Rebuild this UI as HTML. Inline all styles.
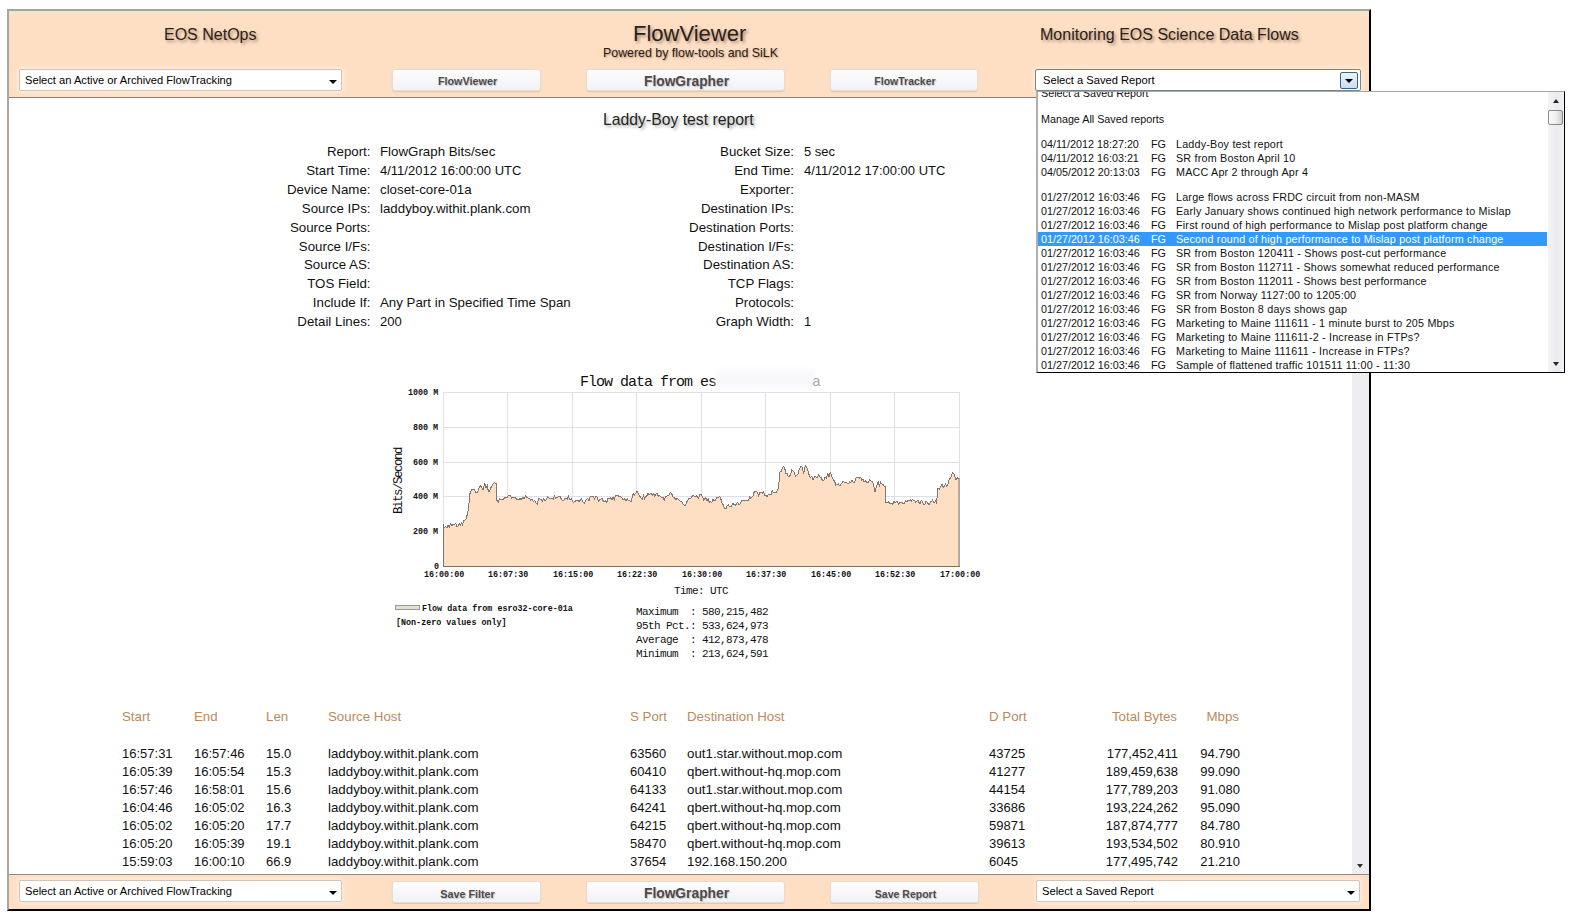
<!DOCTYPE html>
<html><head><meta charset="utf-8">
<style>
*{margin:0;padding:0;box-sizing:border-box}
html,body{width:1574px;height:920px;overflow:hidden;background:#fff;font-family:"Liberation Sans",sans-serif;color:#111}
.a{position:absolute;white-space:nowrap}
#frame{position:absolute;left:7px;top:9px;width:1364px;height:902px;border-top:2px solid #a3a69c;border-left:2px solid #aba49f;border-right:2px solid #000;border-bottom:2px solid #000}
.band{position:absolute;left:9px;width:1360px;background:#ffdfc4}
.ttl{color:#2b2018;text-shadow:2px 2px 3px rgba(60,40,20,.45)}
.sel{position:absolute;height:22px;background:#fff;border:1px solid #cfc5bb;border-radius:2px;box-shadow:0 0 5px 1px rgba(255,255,255,.55);font-size:11.15px;line-height:21px;padding-left:5px;color:#000}
.sel .arr{position:absolute;right:4px;top:10px;width:0;height:0;border-left:4px solid transparent;border-right:4px solid transparent;border-top:4px solid #000}
.btn{position:absolute;height:22px;background:linear-gradient(#fdfdff,#f2f1f4);border:1px solid #e4ddd6;border-radius:3px;box-shadow:0 1px 1px rgba(0,0,0,.12);font-weight:bold;color:#4a4a4a;text-align:center;padding-left:2px;text-shadow:1px 1px 1px rgba(0,0,0,.18)}
.lbl{position:absolute;text-align:right;font-size:13.3px;line-height:18.9px}
.val{position:absolute;font-size:13.3px;line-height:18.9px}
.mono{font-family:"Liberation Mono",monospace}
.th{color:#bb8a5c;font-size:13.3px}
.td{font-size:13.3px;color:#111}
.pop{position:absolute;left:1036px;top:91px;width:529px;height:282px;background:#fff;border-top:1px solid #a5a5a5;border-left:2px solid #b0b0b0;border-right:1px solid #000;border-bottom:1px solid #000;overflow:hidden;font-size:10.75px}
.pop .r{position:absolute;left:0;height:14px;line-height:14px;width:509px;white-space:nowrap}
.pop .r span{position:absolute}
.pop .ds{letter-spacing:.2px}
.tiny{font-family:"Liberation Mono",monospace;font-size:8.4px;font-weight:bold;line-height:8px;color:#111}
</style></head><body>
<div id="frame"></div>
<div class="band" style="top:11px;height:87px"></div>
<div class="a" style="left:9px;top:11px;width:1360px;height:4px;background:linear-gradient(#efe8cc,#ffdfc4)"></div>
<div class="a" style="left:9px;top:97px;width:1360px;height:1px;background:#8a807b"></div>
<div class="a" style="left:9px;top:98px;width:1360px;height:776px;background:#fff"></div>
<div class="band" style="top:875px;height:34px"></div>
<div class="a" style="left:9px;top:874px;width:1360px;height:1px;background:#8f8a86"></div>
<!-- content scrollbar -->
<div class="a" style="left:1352px;top:98px;width:17px;height:776px;background:#eeedf0"></div>
<div class="a" style="left:1357px;top:864px;width:0;height:0;border-left:3.5px solid transparent;border-right:3.5px solid transparent;border-top:4px solid #333"></div>

<!-- header titles -->
<div class="a ttl" style="left:164px;top:26px;font-size:16px">EOS NetOps</div>
<div class="a ttl" style="left:633px;top:21px;font-size:22px">FlowViewer</div>
<div class="a ttl" style="left:603px;top:46px;font-size:12.4px;text-shadow:1px 1px 2px rgba(60,40,20,.4)">Powered by flow-tools and SiLK</div>
<div class="a ttl" style="left:1040px;top:26px;font-size:16px">Monitoring EOS Science Data Flows</div>

<!-- header controls -->
<div class="sel" style="left:19px;top:69px;width:323px">Select an Active or Archived FlowTracking<div class="arr"></div></div>
<div class="btn" style="left:392px;top:69px;width:149px;font-size:10.8px;line-height:23px">FlowViewer</div>
<div class="btn" style="left:586px;top:69px;width:199px;font-size:13.8px;line-height:23px">FlowGrapher</div>
<div class="btn" style="left:830px;top:69px;width:148px;font-size:10.5px;line-height:23px">FlowTracker</div>
<div class="sel" style="left:1035px;top:69px;width:326px;border:1px solid #6f8797;height:22px;line-height:20px;padding-left:7px">Select a Saved Report
 <div class="a" style="right:2px;top:2px;width:18px;height:17px;border:1px solid #3d6383;border-radius:2px;background:linear-gradient(#eaf4fb,#c9def0)"><div class="arr" style="right:4px;top:6px"></div></div></div>

<!-- report title -->
<div class="a ttl" style="left:603px;top:111px;font-size:15.75px;color:#222;text-shadow:2px 2px 3px rgba(0,0,0,.35)">Laddy-Boy test report</div>

<!-- labels -->
<div class="lbl" style="left:200px;top:143px;width:170.5px">Report:<br>Start Time:<br>Device Name:<br>Source IPs:<br>Source Ports:<br>Source I/Fs:<br>Source AS:<br>TOS Field:<br>Include If:<br>Detail Lines:</div>
<div class="val" style="left:380px;top:143px">FlowGraph Bits/sec<br><span style="font-size:13px">4/11/2012 16:00:00 UTC</span><br>closet-core-01a<br>laddyboy.withit.plank.com<br><br><br><br><br>Any Part in Specified Time Span<br><span style="font-size:13px">200</span></div>
<div class="lbl" style="left:600px;top:143px;width:194px">Bucket Size:<br>End Time:<br>Exporter:<br>Destination IPs:<br>Destination Ports:<br>Destination I/Fs:<br>Destination AS:<br>TCP Flags:<br>Protocols:<br>Graph Width:</div>
<div class="val" style="left:804px;top:143px;font-size:13px">5 sec<br>4/11/2012 17:00:00 UTC<br><br><br><br><br><br><br><br>1</div>

<!-- chart -->
<svg class="a" style="left:0;top:0" width="1574" height="920" viewBox="0 0 1574 920">
<g stroke="#e0dfe5" stroke-width="1">
<line x1="443.5" y1="392.5" x2="959.5" y2="392.5"/>
<line x1="443.5" y1="427.5" x2="959.5" y2="427.5"/>
<line x1="443.5" y1="462.5" x2="959.5" y2="462.5"/>
<line x1="443.5" y1="496.5" x2="959.5" y2="496.5"/>
<line x1="443.5" y1="531.5" x2="959.5" y2="531.5"/>
<line x1="507.5" y1="392" x2="507.5" y2="566"/>
<line x1="572.5" y1="392" x2="572.5" y2="566"/>
<line x1="636.5" y1="392" x2="636.5" y2="566"/>
<line x1="701.5" y1="392" x2="701.5" y2="566"/>
<line x1="765.5" y1="392" x2="765.5" y2="566"/>
<line x1="830.5" y1="392" x2="830.5" y2="566"/>
<line x1="894.5" y1="392" x2="894.5" y2="566"/>
<line x1="959.5" y1="392" x2="959.5" y2="566"/>
<line x1="443.5" y1="392" x2="443.5" y2="566"/>
</g>
<path d="M443.5,566.5 L443.5,523.9 L443.8,528.0 L445.4,526.8 L447.0,527.4 L448.2,525.1 L449.4,527.1 L450.6,523.6 L451.8,525.5 L453.0,524.8 L454.3,524.7 L455.7,523.6 L457.0,526.5 L458.1,526.2 L459.2,523.4 L460.4,525.1 L461.5,522.9 L462.6,524.8 L463.7,520.6 L464.9,520.3 L466.0,518.7 L467.4,514.3 L468.7,506.5 L470.0,493.5 L471.5,489.8 L473.0,490.0 L474.2,489.3 L475.3,492.1 L476.5,492.2 L477.7,492.4 L478.8,488.3 L480.0,485.7 L481.5,487.1 L483.0,489.6 L484.8,483.5 L486.0,488.0 L487.2,485.2 L488.4,491.5 L489.6,491.7 L490.8,487.8 L492.0,486.0 L493.1,483.5 L494.2,482.8 L495.4,483.1 L496.5,483.5 L497.0,500.4 L498.3,501.9 L499.7,498.5 L501.0,500.0 L502.2,499.8 L503.5,499.4 L504.8,497.4 L506.0,497.4 L507.1,497.6 L508.3,495.1 L509.4,495.1 L510.6,495.9 L511.7,498.3 L512.9,497.0 L514.0,497.4 L515.2,497.1 L516.4,499.1 L517.5,499.1 L518.7,500.0 L520.0,498.1 L521.3,499.8 L522.6,497.4 L524.1,498.4 L525.5,496.1 L527.0,497.4 L528.2,498.2 L529.5,498.3 L530.8,500.6 L532.0,499.0 L533.3,501.5 L534.7,500.6 L536.0,503.0 L537.3,504.2 L538.7,498.3 L540.0,499.0 L541.2,499.0 L542.5,501.3 L543.8,498.6 L545.0,500.9 L546.2,499.8 L547.5,496.4 L548.7,497.8 L549.8,498.5 L551.0,498.9 L552.1,497.8 L553.2,499.2 L554.4,496.2 L555.5,498.0 L556.6,497.4 L557.7,497.2 L558.9,496.4 L560.0,496.5 L561.4,499.4 L562.9,501.1 L564.3,500.0 L565.0,498.5 L566.1,498.4 L567.2,499.4 L568.3,496.2 L569.4,499.5 L570.5,499.3 L571.6,498.5 L572.7,502.0 L573.9,502.1 L575.0,501.4 L576.3,500.0 L577.6,500.2 L579.0,501.4 L580.3,500.2 L581.7,498.8 L583.0,502.2 L584.4,503.5 L585.5,500.8 L586.7,499.6 L587.8,498.4 L588.9,501.1 L590.0,496.9 L591.2,496.5 L592.3,496.9 L593.4,496.3 L594.5,498.8 L595.6,496.9 L597.0,496.8 L598.5,501.0 L599.7,499.7 L600.8,499.3 L602.0,498.0 L603.2,501.0 L604.3,501.7 L605.5,501.0 L606.8,502.3 L608.0,498.6 L609.2,498.7 L610.5,497.8 L611.8,499.9 L613.0,497.3 L614.3,499.6 L615.6,495.3 L616.9,495.4 L618.2,495.6 L619.5,496.9 L620.8,496.3 L622.1,498.5 L623.4,499.8 L624.7,498.9 L626.0,501.0 L627.2,498.6 L628.5,501.0 L629.8,500.9 L631.0,501.8 L632.1,498.0 L633.2,493.5 L634.5,495.2 L635.7,493.2 L637.0,491.5 L638.3,493.5 L639.6,495.9 L641.0,498.0 L642.3,499.0 L643.4,495.4 L644.6,498.6 L645.7,496.7 L646.9,495.9 L648.0,492.7 L649.1,494.9 L650.3,493.4 L651.5,494.0 L652.6,495.2 L653.8,493.4 L654.9,496.4 L656.1,493.6 L657.2,493.9 L658.4,496.4 L659.6,495.7 L660.7,496.3 L661.9,498.1 L663.0,497.4 L664.2,500.6 L665.4,496.8 L666.7,496.4 L667.9,495.0 L669.1,495.2 L670.4,492.2 L671.6,493.5 L673.1,497.4 L674.5,498.0 L676.0,499.3 L677.2,498.2 L678.3,499.5 L679.5,500.8 L680.7,501.7 L681.8,501.2 L683.0,503.9 L684.2,505.3 L685.3,505.6 L686.5,502.6 L687.8,500.1 L689.0,498.0 L690.0,498.4 L691.2,498.0 L692.5,495.7 L693.7,495.5 L694.9,496.5 L696.2,495.8 L697.4,496.8 L698.6,498.4 L699.9,494.8 L701.1,494.0 L702.4,496.4 L703.6,499.8 L704.7,498.6 L705.9,497.7 L707.1,500.8 L708.2,499.1 L709.4,502.6 L710.6,501.6 L711.8,502.9 L713.0,499.3 L714.3,501.0 L715.5,499.9 L716.8,497.4 L718.1,497.7 L719.3,496.5 L720.6,498.0 L722.0,502.8 L723.3,505.0 L724.7,508.3 L725.9,509.0 L727.1,505.9 L728.3,504.6 L729.4,506.9 L730.6,507.0 L731.8,505.6 L733.0,503.0 L734.1,504.8 L735.2,505.1 L736.3,504.8 L737.4,502.4 L738.5,504.1 L739.6,504.2 L740.7,502.8 L741.8,500.5 L742.9,499.9 L744.0,500.6 L745.1,499.9 L746.2,500.5 L747.3,500.4 L748.5,500.6 L749.6,496.8 L750.8,498.2 L751.9,497.4 L753.0,496.0 L754.2,491.8 L755.3,491.4 L756.4,491.3 L757.5,492.7 L758.6,495.5 L759.8,492.9 L761.0,491.9 L762.3,493.1 L763.5,491.4 L764.8,495.5 L766.0,495.5 L767.2,496.8 L768.5,494.4 L769.8,494.8 L771.0,495.1 L772.2,490.9 L773.5,492.6 L774.7,492.4 L776.0,492.7 L777.2,491.0 L778.4,488.5 L780.0,472.0 L781.1,471.5 L782.3,468.3 L783.4,466.6 L784.6,467.5 L785.8,473.3 L787.1,473.5 L788.3,477.0 L789.4,476.2 L790.6,474.8 L791.7,470.0 L792.9,470.8 L794.2,472.1 L795.4,476.3 L796.6,475.3 L798.0,474.3 L799.3,469.2 L800.6,466.8 L802.0,466.6 L803.6,473.6 L805.3,465.8 L806.8,466.9 L808.2,471.6 L809.4,475.9 L810.6,477.5 L811.8,476.2 L813.0,480.2 L815.0,476.4 L816.3,477.5 L817.5,477.6 L818.8,474.5 L820.1,477.4 L821.3,477.9 L822.6,480.7 L823.9,480.0 L825.1,476.9 L826.4,477.9 L827.7,473.6 L829.0,476.8 L830.3,472.6 L832.2,477.4 L833.4,480.0 L834.6,481.1 L835.8,485.1 L837.0,484.6 L838.2,483.9 L839.4,485.8 L840.5,485.2 L841.7,483.1 L842.8,481.7 L844.0,482.0 L845.1,482.3 L846.3,482.2 L847.4,483.6 L848.5,483.8 L849.7,481.8 L850.8,482.3 L852.0,480.6 L853.1,482.2 L854.5,482.2 L856.0,477.9 L857.2,477.0 L858.4,477.4 L859.6,478.0 L860.8,477.4 L861.9,480.4 L863.0,478.7 L864.1,482.2 L865.2,480.9 L866.3,481.9 L867.4,482.6 L868.6,482.4 L869.8,479.4 L871.0,481.2 L872.2,481.2 L873.6,484.8 L875.0,491.7 L877.0,485.0 L878.2,482.1 L879.4,485.9 L880.5,482.2 L881.7,483.6 L883.0,484.4 L884.2,486.7 L885.5,486.5 L886.0,502.2 L887.1,502.8 L888.3,501.9 L889.4,503.1 L890.5,503.2 L891.7,503.3 L892.8,504.5 L894.0,500.9 L895.1,503.2 L896.2,501.6 L897.4,501.7 L898.5,504.2 L899.7,502.8 L900.8,502.7 L902.0,502.7 L903.2,503.3 L904.4,503.8 L905.5,501.0 L906.7,501.5 L907.9,500.6 L909.1,500.2 L910.3,499.8 L911.4,500.9 L912.5,499.7 L913.6,500.2 L914.7,500.0 L915.8,502.5 L916.9,501.3 L918.0,500.3 L919.1,502.7 L920.3,503.5 L921.4,500.3 L922.6,502.3 L923.7,504.8 L924.8,504.6 L926.0,501.4 L927.1,501.8 L928.3,503.9 L929.4,504.6 L930.5,501.6 L931.6,501.7 L932.7,500.0 L933.8,502.3 L934.9,502.1 L936.0,499.8 L936.5,503.6 L938.0,488.4 L939.4,489.3 L940.8,486.0 L942.0,484.2 L943.1,487.1 L944.3,486.8 L945.4,484.1 L946.6,486.0 L948.0,484.4 L949.4,478.8 L950.8,478.1 L952.3,472.6 L953.6,473.3 L955.0,477.0 L956.2,480.0 L957.3,477.7 L958.5,478.8 L959.0,478.8 L959,566.5 Z" fill="#ffdfc4"/>
<polyline points="443.5,523.9 443.8,528.0 445.4,526.8 447.0,527.4 448.2,525.1 449.4,527.1 450.6,523.6 451.8,525.5 453.0,524.8 454.3,524.7 455.7,523.6 457.0,526.5 458.1,526.2 459.2,523.4 460.4,525.1 461.5,522.9 462.6,524.8 463.7,520.6 464.9,520.3 466.0,518.7 467.4,514.3 468.7,506.5 470.0,493.5 471.5,489.8 473.0,490.0 474.2,489.3 475.3,492.1 476.5,492.2 477.7,492.4 478.8,488.3 480.0,485.7 481.5,487.1 483.0,489.6 484.8,483.5 486.0,488.0 487.2,485.2 488.4,491.5 489.6,491.7 490.8,487.8 492.0,486.0 493.1,483.5 494.2,482.8 495.4,483.1 496.5,483.5 497.0,500.4 498.3,501.9 499.7,498.5 501.0,500.0 502.2,499.8 503.5,499.4 504.8,497.4 506.0,497.4 507.1,497.6 508.3,495.1 509.4,495.1 510.6,495.9 511.7,498.3 512.9,497.0 514.0,497.4 515.2,497.1 516.4,499.1 517.5,499.1 518.7,500.0 520.0,498.1 521.3,499.8 522.6,497.4 524.1,498.4 525.5,496.1 527.0,497.4 528.2,498.2 529.5,498.3 530.8,500.6 532.0,499.0 533.3,501.5 534.7,500.6 536.0,503.0 537.3,504.2 538.7,498.3 540.0,499.0 541.2,499.0 542.5,501.3 543.8,498.6 545.0,500.9 546.2,499.8 547.5,496.4 548.7,497.8 549.8,498.5 551.0,498.9 552.1,497.8 553.2,499.2 554.4,496.2 555.5,498.0 556.6,497.4 557.7,497.2 558.9,496.4 560.0,496.5 561.4,499.4 562.9,501.1 564.3,500.0 565.0,498.5 566.1,498.4 567.2,499.4 568.3,496.2 569.4,499.5 570.5,499.3 571.6,498.5 572.7,502.0 573.9,502.1 575.0,501.4 576.3,500.0 577.6,500.2 579.0,501.4 580.3,500.2 581.7,498.8 583.0,502.2 584.4,503.5 585.5,500.8 586.7,499.6 587.8,498.4 588.9,501.1 590.0,496.9 591.2,496.5 592.3,496.9 593.4,496.3 594.5,498.8 595.6,496.9 597.0,496.8 598.5,501.0 599.7,499.7 600.8,499.3 602.0,498.0 603.2,501.0 604.3,501.7 605.5,501.0 606.8,502.3 608.0,498.6 609.2,498.7 610.5,497.8 611.8,499.9 613.0,497.3 614.3,499.6 615.6,495.3 616.9,495.4 618.2,495.6 619.5,496.9 620.8,496.3 622.1,498.5 623.4,499.8 624.7,498.9 626.0,501.0 627.2,498.6 628.5,501.0 629.8,500.9 631.0,501.8 632.1,498.0 633.2,493.5 634.5,495.2 635.7,493.2 637.0,491.5 638.3,493.5 639.6,495.9 641.0,498.0 642.3,499.0 643.4,495.4 644.6,498.6 645.7,496.7 646.9,495.9 648.0,492.7 649.1,494.9 650.3,493.4 651.5,494.0 652.6,495.2 653.8,493.4 654.9,496.4 656.1,493.6 657.2,493.9 658.4,496.4 659.6,495.7 660.7,496.3 661.9,498.1 663.0,497.4 664.2,500.6 665.4,496.8 666.7,496.4 667.9,495.0 669.1,495.2 670.4,492.2 671.6,493.5 673.1,497.4 674.5,498.0 676.0,499.3 677.2,498.2 678.3,499.5 679.5,500.8 680.7,501.7 681.8,501.2 683.0,503.9 684.2,505.3 685.3,505.6 686.5,502.6 687.8,500.1 689.0,498.0 690.0,498.4 691.2,498.0 692.5,495.7 693.7,495.5 694.9,496.5 696.2,495.8 697.4,496.8 698.6,498.4 699.9,494.8 701.1,494.0 702.4,496.4 703.6,499.8 704.7,498.6 705.9,497.7 707.1,500.8 708.2,499.1 709.4,502.6 710.6,501.6 711.8,502.9 713.0,499.3 714.3,501.0 715.5,499.9 716.8,497.4 718.1,497.7 719.3,496.5 720.6,498.0 722.0,502.8 723.3,505.0 724.7,508.3 725.9,509.0 727.1,505.9 728.3,504.6 729.4,506.9 730.6,507.0 731.8,505.6 733.0,503.0 734.1,504.8 735.2,505.1 736.3,504.8 737.4,502.4 738.5,504.1 739.6,504.2 740.7,502.8 741.8,500.5 742.9,499.9 744.0,500.6 745.1,499.9 746.2,500.5 747.3,500.4 748.5,500.6 749.6,496.8 750.8,498.2 751.9,497.4 753.0,496.0 754.2,491.8 755.3,491.4 756.4,491.3 757.5,492.7 758.6,495.5 759.8,492.9 761.0,491.9 762.3,493.1 763.5,491.4 764.8,495.5 766.0,495.5 767.2,496.8 768.5,494.4 769.8,494.8 771.0,495.1 772.2,490.9 773.5,492.6 774.7,492.4 776.0,492.7 777.2,491.0 778.4,488.5 780.0,472.0 781.1,471.5 782.3,468.3 783.4,466.6 784.6,467.5 785.8,473.3 787.1,473.5 788.3,477.0 789.4,476.2 790.6,474.8 791.7,470.0 792.9,470.8 794.2,472.1 795.4,476.3 796.6,475.3 798.0,474.3 799.3,469.2 800.6,466.8 802.0,466.6 803.6,473.6 805.3,465.8 806.8,466.9 808.2,471.6 809.4,475.9 810.6,477.5 811.8,476.2 813.0,480.2 815.0,476.4 816.3,477.5 817.5,477.6 818.8,474.5 820.1,477.4 821.3,477.9 822.6,480.7 823.9,480.0 825.1,476.9 826.4,477.9 827.7,473.6 829.0,476.8 830.3,472.6 832.2,477.4 833.4,480.0 834.6,481.1 835.8,485.1 837.0,484.6 838.2,483.9 839.4,485.8 840.5,485.2 841.7,483.1 842.8,481.7 844.0,482.0 845.1,482.3 846.3,482.2 847.4,483.6 848.5,483.8 849.7,481.8 850.8,482.3 852.0,480.6 853.1,482.2 854.5,482.2 856.0,477.9 857.2,477.0 858.4,477.4 859.6,478.0 860.8,477.4 861.9,480.4 863.0,478.7 864.1,482.2 865.2,480.9 866.3,481.9 867.4,482.6 868.6,482.4 869.8,479.4 871.0,481.2 872.2,481.2 873.6,484.8 875.0,491.7 877.0,485.0 878.2,482.1 879.4,485.9 880.5,482.2 881.7,483.6 883.0,484.4 884.2,486.7 885.5,486.5 886.0,502.2 887.1,502.8 888.3,501.9 889.4,503.1 890.5,503.2 891.7,503.3 892.8,504.5 894.0,500.9 895.1,503.2 896.2,501.6 897.4,501.7 898.5,504.2 899.7,502.8 900.8,502.7 902.0,502.7 903.2,503.3 904.4,503.8 905.5,501.0 906.7,501.5 907.9,500.6 909.1,500.2 910.3,499.8 911.4,500.9 912.5,499.7 913.6,500.2 914.7,500.0 915.8,502.5 916.9,501.3 918.0,500.3 919.1,502.7 920.3,503.5 921.4,500.3 922.6,502.3 923.7,504.8 924.8,504.6 926.0,501.4 927.1,501.8 928.3,503.9 929.4,504.6 930.5,501.6 931.6,501.7 932.7,500.0 933.8,502.3 934.9,502.1 936.0,499.8 936.5,503.6 938.0,488.4 939.4,489.3 940.8,486.0 942.0,484.2 943.1,487.1 944.3,486.8 945.4,484.1 946.6,486.0 948.0,484.4 949.4,478.8 950.8,478.1 952.3,472.6 953.6,473.3 955.0,477.0 956.2,480.0 957.3,477.7 958.5,478.8 959.0,478.8" fill="none" stroke="#85776f" stroke-width="1" shape-rendering="crispEdges"/>
<line x1="443.5" y1="524" x2="443.5" y2="566.5" stroke="#7d7068"/>
<line x1="959" y1="478" x2="959" y2="566.5" stroke="#7d7068"/>
<line x1="443" y1="566.5" x2="960" y2="566.5" stroke="#7d7068"/>
</svg>
<div class="a mono" style="left:580px;top:374px;font-size:15px;letter-spacing:-1px;color:#111">Flow data from es</div>
<div class="a" style="left:716px;top:370px;width:98px;height:18px;background:#f8f7fa;filter:blur(2px)"></div>
<div class="a mono" style="left:812px;top:374px;font-size:15px;color:#aaa">a</div>
<div class="a mono" style="left:393px;top:514px;transform:rotate(-90deg);transform-origin:0 0;font-size:12.5px;letter-spacing:-1.5px;line-height:12px">Bits/Second</div>
<div class="tiny">
 <div class="a" style="left:408px;top:389px">1000 M</div>
 <div class="a" style="left:413px;top:424px">800 M</div>
 <div class="a" style="left:413px;top:459px">600 M</div>
 <div class="a" style="left:413px;top:493px">400 M</div>
 <div class="a" style="left:413px;top:528px">200 M</div>
 <div class="a" style="left:434px;top:563px">0</div>
 <div class="a" style="left:424px;top:571px">16:00:00</div>
 <div class="a" style="left:488px;top:571px">16:07:30</div>
 <div class="a" style="left:553px;top:571px">16:15:00</div>
 <div class="a" style="left:617px;top:571px">16:22:30</div>
 <div class="a" style="left:682px;top:571px">16:30:00</div>
 <div class="a" style="left:746px;top:571px">16:37:30</div>
 <div class="a" style="left:811px;top:571px">16:45:00</div>
 <div class="a" style="left:875px;top:571px">16:52:30</div>
 <div class="a" style="left:940px;top:571px">17:00:00</div>
</div>
<div class="a mono" style="left:674px;top:585px;font-size:11px;letter-spacing:-.6px">Time: UTC</div>
<div class="a" style="left:395px;top:605px;width:25px;height:5px;background:#e3e1cc;border:1px solid #999"></div>
<div class="a tiny" style="left:422px;top:605px">Flow data from esro32-core-01a</div>
<div class="a tiny" style="left:396px;top:619px">[Non-zero values only]</div>
<div class="a mono" style="left:636px;top:605px;font-size:11px;letter-spacing:-.6px;line-height:14px;white-space:pre">Maximum  : 580,215,482
95th Pct.: 533,624,973
Average  : 412,873,478
Minimum  : 213,624,591</div>

<!-- table -->
<div class="a th" style="left:122px;top:709px">Start</div>
<div class="a th" style="left:194px;top:709px">End</div>
<div class="a th" style="left:266px;top:709px">Len</div>
<div class="a th" style="left:328px;top:709px">Source Host</div>
<div class="a th" style="left:630px;top:709px">S Port</div>
<div class="a th" style="left:687px;top:709px">Destination Host</div>
<div class="a th" style="left:989px;top:709px">D Port</div>
<div class="a th" style="left:1077px;top:709px;width:100px;text-align:right">Total Bytes</div>
<div class="a th" style="left:1139px;top:709px;width:100px;text-align:right">Mbps</div>
<div class="a td" style="left:122px;top:746px;font-size:13px">16:57:31</div>
<div class="a td" style="left:194px;top:746px;font-size:13px">16:57:46</div>
<div class="a td" style="left:266px;top:746px;font-size:13px">15.0</div>
<div class="a td" style="left:328px;top:746px">laddyboy.withit.plank.com</div>
<div class="a td" style="left:630px;top:746px;font-size:13px">63560</div>
<div class="a td" style="left:687px;top:746px">out1.star.without.mop.com</div>
<div class="a td" style="left:989px;top:746px;font-size:13px">43725</div>
<div class="a td" style="left:1078px;top:746px;width:100px;text-align:right;font-size:13px">177,452,411</div>
<div class="a td" style="left:1140px;top:746px;width:100px;text-align:right;font-size:13px">94.790</div>
<div class="a td" style="left:122px;top:764px;font-size:13px">16:05:39</div>
<div class="a td" style="left:194px;top:764px;font-size:13px">16:05:54</div>
<div class="a td" style="left:266px;top:764px;font-size:13px">15.3</div>
<div class="a td" style="left:328px;top:764px">laddyboy.withit.plank.com</div>
<div class="a td" style="left:630px;top:764px;font-size:13px">60410</div>
<div class="a td" style="left:687px;top:764px">qbert.without-hq.mop.com</div>
<div class="a td" style="left:989px;top:764px;font-size:13px">41277</div>
<div class="a td" style="left:1078px;top:764px;width:100px;text-align:right;font-size:13px">189,459,638</div>
<div class="a td" style="left:1140px;top:764px;width:100px;text-align:right;font-size:13px">99.090</div>
<div class="a td" style="left:122px;top:782px;font-size:13px">16:57:46</div>
<div class="a td" style="left:194px;top:782px;font-size:13px">16:58:01</div>
<div class="a td" style="left:266px;top:782px;font-size:13px">15.6</div>
<div class="a td" style="left:328px;top:782px">laddyboy.withit.plank.com</div>
<div class="a td" style="left:630px;top:782px;font-size:13px">64133</div>
<div class="a td" style="left:687px;top:782px">out1.star.without.mop.com</div>
<div class="a td" style="left:989px;top:782px;font-size:13px">44154</div>
<div class="a td" style="left:1078px;top:782px;width:100px;text-align:right;font-size:13px">177,789,203</div>
<div class="a td" style="left:1140px;top:782px;width:100px;text-align:right;font-size:13px">91.080</div>
<div class="a td" style="left:122px;top:800px;font-size:13px">16:04:46</div>
<div class="a td" style="left:194px;top:800px;font-size:13px">16:05:02</div>
<div class="a td" style="left:266px;top:800px;font-size:13px">16.3</div>
<div class="a td" style="left:328px;top:800px">laddyboy.withit.plank.com</div>
<div class="a td" style="left:630px;top:800px;font-size:13px">64241</div>
<div class="a td" style="left:687px;top:800px">qbert.without-hq.mop.com</div>
<div class="a td" style="left:989px;top:800px;font-size:13px">33686</div>
<div class="a td" style="left:1078px;top:800px;width:100px;text-align:right;font-size:13px">193,224,262</div>
<div class="a td" style="left:1140px;top:800px;width:100px;text-align:right;font-size:13px">95.090</div>
<div class="a td" style="left:122px;top:818px;font-size:13px">16:05:02</div>
<div class="a td" style="left:194px;top:818px;font-size:13px">16:05:20</div>
<div class="a td" style="left:266px;top:818px;font-size:13px">17.7</div>
<div class="a td" style="left:328px;top:818px">laddyboy.withit.plank.com</div>
<div class="a td" style="left:630px;top:818px;font-size:13px">64215</div>
<div class="a td" style="left:687px;top:818px">qbert.without-hq.mop.com</div>
<div class="a td" style="left:989px;top:818px;font-size:13px">59871</div>
<div class="a td" style="left:1078px;top:818px;width:100px;text-align:right;font-size:13px">187,874,777</div>
<div class="a td" style="left:1140px;top:818px;width:100px;text-align:right;font-size:13px">84.780</div>
<div class="a td" style="left:122px;top:836px;font-size:13px">16:05:20</div>
<div class="a td" style="left:194px;top:836px;font-size:13px">16:05:39</div>
<div class="a td" style="left:266px;top:836px;font-size:13px">19.1</div>
<div class="a td" style="left:328px;top:836px">laddyboy.withit.plank.com</div>
<div class="a td" style="left:630px;top:836px;font-size:13px">58470</div>
<div class="a td" style="left:687px;top:836px">qbert.without-hq.mop.com</div>
<div class="a td" style="left:989px;top:836px;font-size:13px">39613</div>
<div class="a td" style="left:1078px;top:836px;width:100px;text-align:right;font-size:13px">193,534,502</div>
<div class="a td" style="left:1140px;top:836px;width:100px;text-align:right;font-size:13px">80.910</div>
<div class="a td" style="left:122px;top:854px;font-size:13px">15:59:03</div>
<div class="a td" style="left:194px;top:854px;font-size:13px">16:00:10</div>
<div class="a td" style="left:266px;top:854px;font-size:13px">66.9</div>
<div class="a td" style="left:328px;top:854px">laddyboy.withit.plank.com</div>
<div class="a td" style="left:630px;top:854px;font-size:13px">37654</div>
<div class="a td" style="left:687px;top:854px">192.168.150.200</div>
<div class="a td" style="left:989px;top:854px;font-size:13px">6045</div>
<div class="a td" style="left:1078px;top:854px;width:100px;text-align:right;font-size:13px">177,495,742</div>
<div class="a td" style="left:1140px;top:854px;width:100px;text-align:right;font-size:13px">21.210</div>

<!-- footer controls -->
<div class="sel" style="left:19px;top:880px;width:323px">Select an Active or Archived FlowTracking<div class="arr"></div></div>
<div class="btn" style="left:392px;top:881px;width:149px;font-size:10.8px;line-height:24px">Save Filter</div>
<div class="btn" style="left:586px;top:881px;width:199px;font-size:13.8px;line-height:24px">FlowGrapher</div>
<div class="btn" style="left:830px;top:881px;width:149px;font-size:10.5px;line-height:24px">Save Report</div>
<div class="sel" style="left:1036px;top:880px;width:324px">Select a Saved Report<div class="arr"></div></div>

<!-- dropdown popup -->
<div class="pop">
 <div class="r" style="top:-6px"><span style="left:3px">Select a Saved Report</span></div>
 <div class="r" style="top:20px"><span style="left:3px">Manage All Saved reports</span></div>
 <div class="r" style="top:45px"><span style="left:3px">04/11/2012 18:27:20</span><span style="left:113px">FG</span><span class="ds" style="left:138px">Laddy-Boy test report</span></div>
 <div class="r" style="top:59px"><span style="left:3px">04/11/2012 16:03:21</span><span style="left:113px">FG</span><span class="ds" style="left:138px">SR from Boston April 10</span></div>
 <div class="r" style="top:73px"><span style="left:3px">04/05/2012 20:13:03</span><span style="left:113px">FG</span><span class="ds" style="left:138px">MACC Apr 2 through Apr 4</span></div>
 <div class="r" style="top:98px"><span style="left:3px">01/27/2012 16:03:46</span><span style="left:113px">FG</span><span class="ds" style="left:138px">Large flows across FRDC circuit from non-MASM</span></div>
 <div class="r" style="top:112px"><span style="left:3px">01/27/2012 16:03:46</span><span style="left:113px">FG</span><span class="ds" style="left:138px">Early January shows continued high network performance to Mislap</span></div>
 <div class="r" style="top:126px"><span style="left:3px">01/27/2012 16:03:46</span><span style="left:113px">FG</span><span class="ds" style="left:138px">First round of high performance to Mislap post platform change</span></div>
 <div class="r" style="top:140px;background:#3399ff;color:#fff"><span style="left:3px">01/27/2012 16:03:46</span><span style="left:113px">FG</span><span class="ds" style="left:138px">Second round of high performance to Mislap post platform change</span></div>
 <div class="r" style="top:154px"><span style="left:3px">01/27/2012 16:03:46</span><span style="left:113px">FG</span><span class="ds" style="left:138px">SR from Boston 120411 - Shows post-cut performance</span></div>
 <div class="r" style="top:168px"><span style="left:3px">01/27/2012 16:03:46</span><span style="left:113px">FG</span><span class="ds" style="left:138px">SR from Boston 112711 - Shows somewhat reduced performance</span></div>
 <div class="r" style="top:182px"><span style="left:3px">01/27/2012 16:03:46</span><span style="left:113px">FG</span><span class="ds" style="left:138px">SR from Boston 112011 - Shows best performance</span></div>
 <div class="r" style="top:196px"><span style="left:3px">01/27/2012 16:03:46</span><span style="left:113px">FG</span><span class="ds" style="left:138px">SR from Norway 1127:00 to 1205:00</span></div>
 <div class="r" style="top:210px"><span style="left:3px">01/27/2012 16:03:46</span><span style="left:113px">FG</span><span class="ds" style="left:138px">SR from Boston 8 days shows gap</span></div>
 <div class="r" style="top:224px"><span style="left:3px">01/27/2012 16:03:46</span><span style="left:113px">FG</span><span class="ds" style="left:138px">Marketing to Maine 111611 - 1 minute burst to 205 Mbps</span></div>
 <div class="r" style="top:238px"><span style="left:3px">01/27/2012 16:03:46</span><span style="left:113px">FG</span><span class="ds" style="left:138px">Marketing to Maine 111611-2 - Increase in FTPs?</span></div>
 <div class="r" style="top:252px"><span style="left:3px">01/27/2012 16:03:46</span><span style="left:113px">FG</span><span class="ds" style="left:138px">Marketing to Maine 111611 - Increase in FTPs?</span></div>
 <div class="r" style="top:266px"><span style="left:3px">01/27/2012 16:03:46</span><span style="left:113px">FG</span><span class="ds" style="left:138px">Sample of flattened traffic 101511 11:00 - 11:30</span></div>
 <div class="a" style="left:510px;top:0;width:16px;height:280px;background:linear-gradient(90deg,#f4f4f6,#ebeaee 60%,#f2f2f4)"></div>
 <div class="a" style="left:515px;top:7px;width:0;height:0;border-left:3.5px solid transparent;border-right:3.5px solid transparent;border-bottom:4px solid #222"></div>
 <div class="a" style="left:510px;top:18px;width:15px;height:15px;border:1px solid #8a8a8a;border-radius:2px;background:linear-gradient(90deg,#fafafa,#f0f0f0 50%,#cfcfcf)"></div>
 <div class="a" style="left:515px;top:270px;width:0;height:0;border-left:3.5px solid transparent;border-right:3.5px solid transparent;border-top:4px solid #222"></div>
</div>
</body></html>
